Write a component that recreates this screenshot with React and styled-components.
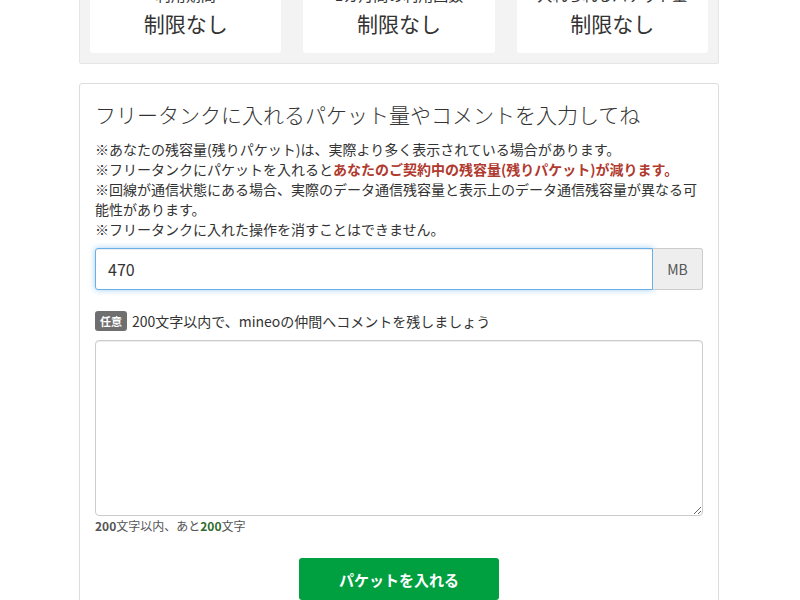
import styled, { createGlobalStyle } from "styled-components";

const GlobalStyle = createGlobalStyle`
  html, body {
    margin: 0;
    padding: 0;
    background: #fff;
    overflow: hidden;
  }
  body {
    font-family: "Noto Sans CJK JP", "Noto Sans", sans-serif;
    color: #333;
  }
`;

const Page = styled.div`
  width: 640px;
  margin: 0 auto;
  transform: translateX(-1px);
`;

const StatsPanel = styled.div`
  margin-top: -36px;
  background: #f3f3f3;
  border: 1px solid #e6e6e6;
  border-radius: 2px;
  padding: 10px;
  display: grid;
  grid-template-columns: repeat(3, 1fr);
  gap: 22px;
`;

const StatCard = styled.div`
  background: #fff;
  border-radius: 3px;
  padding: 10px 0 15px;
  text-align: center;
`;

const StatLabel = styled.div`
  font-size: 15px;
  line-height: 20px;
  margin-bottom: 3px;
  color: #333;
`;

const StatValue = styled.div`
  font-size: 21px;
  line-height: 30px;
  color: #333;
`;

const FormPanel = styled.div`
  margin-top: 19px;
  border: 1px solid #ddd;
  border-radius: 3px;
  padding: 15px 15px 40px;
`;

const Heading = styled.h2`
  margin: 0 0 10px;
  font-size: 21px;
  line-height: 30px;
  font-weight: 300;
  color: #333;
`;

const Notes = styled.div`
  font-size: 14px;
  line-height: 20px;
  color: #333;
`;

const Warn = styled.strong`
  color: #b03a2e;
  font-weight: 700;
`;

const InputGroup = styled.div`
  display: flex;
  margin-top: 9px;
  height: 42px;
`;

const AmountInput = styled.input`
  flex: 1;
  min-width: 0;
  box-sizing: border-box;
  height: 42px;
  border: 1px solid #66afe9;
  border-radius: 3px 0 0 3px;
  box-shadow: inset 0 1px 1px rgba(0, 0, 0, 0.075), 0 0 6px rgba(102, 175, 233, 0.6);
  padding: 0 12px;
  font-family: "Noto Sans CJK JP", "Noto Sans", sans-serif;
  font-size: 16px;
  color: #333;
  outline: none;
`;

const Addon = styled.span`
  width: 50px;
  box-sizing: border-box;
  display: flex;
  align-items: center;
  justify-content: center;
  background: #eee;
  border: 1px solid #ccc;
  border-left: none;
  border-radius: 0 3px 3px 0;
  font-size: 14px;
  color: #555;
`;

const CommentLabel = styled.div`
  margin-top: 21px;
  display: flex;
  align-items: center;
  gap: 5px;
  font-size: 14px;
  line-height: 20px;
  color: #333;
`;

const Badge = styled.span`
  background: #6f6f6f;
  color: #fff;
  font-size: 11px;
  font-weight: 700;
  line-height: 20px;
  padding: 0 5px;
  border-radius: 3px;
`;

const CommentBox = styled.textarea`
  display: block;
  box-sizing: border-box;
  width: 100%;
  height: 176px;
  margin-top: 9px;
  border: 1px solid #ccc;
  border-radius: 4px;
  box-shadow: inset 0 1px 1px rgba(0, 0, 0, 0.075);
  padding: 6px 12px;
  font-family: "Noto Sans CJK JP", "Noto Sans", sans-serif;
  font-size: 14px;
  resize: vertical;
  outline: none;
`;

const Counter = styled.div`
  margin-top: 1px;
  font-size: 12px;
  line-height: 17px;
  color: #555;
`;

const Num = styled.b`
  color: ${(p) => (p.$accent ? "#2e6b2e" : "#555")};
`;

const Actions = styled.div`
  display: flex;
  justify-content: center;
  margin-top: 24px;
`;

const SubmitButton = styled.button`
  width: 200px;
  height: 42px;
  background: #00a040;
  color: #fff;
  border: none;
  border-radius: 3px;
  font-family: "Noto Sans CJK JP", "Noto Sans", sans-serif;
  font-size: 15px;
  font-weight: 700;
  cursor: pointer;
`;

const stats = [
  { label: "利用期間", value: "制限なし" },
  { label: "1カ月間の利用回数", value: "制限なし" },
  { label: "入れられるパケット量", value: "制限なし" },
];

export default function App() {
  return (
    <>
      <GlobalStyle />
      <Page>
        <StatsPanel>
          {stats.map((s) => (
            <StatCard key={s.label}>
              <StatLabel>{s.label}</StatLabel>
              <StatValue>{s.value}</StatValue>
            </StatCard>
          ))}
        </StatsPanel>

        <FormPanel>
          <Heading>フリータンクに入れるパケット量やコメントを入力してね</Heading>
          <Notes>
            ※あなたの残容量(残りパケット)は、実際より多く表示されている場合があります。
            <br />
            ※フリータンクにパケットを入れると
            <Warn>あなたのご契約中の残容量(残りパケット)が減ります。</Warn>
            <br />
            ※回線が通信状態にある場合、実際のデータ通信残容量と表示上のデータ通信残容量が異なる可能性があります。
            <br />
            ※フリータンクに入れた操作を消すことはできません。
          </Notes>

          <InputGroup>
            <AmountInput type="text" defaultValue="470" />
            <Addon>MB</Addon>
          </InputGroup>

          <CommentLabel>
            <Badge>任意</Badge>
            200文字以内で、mineoの仲間へコメントを残しましょう
          </CommentLabel>
          <CommentBox />
          <Counter>
            <Num>200</Num>文字以内、あと<Num $accent>200</Num>文字
          </Counter>

          <Actions>
            <SubmitButton>パケットを入れる</SubmitButton>
          </Actions>
        </FormPanel>
      </Page>
    </>
  );
}
